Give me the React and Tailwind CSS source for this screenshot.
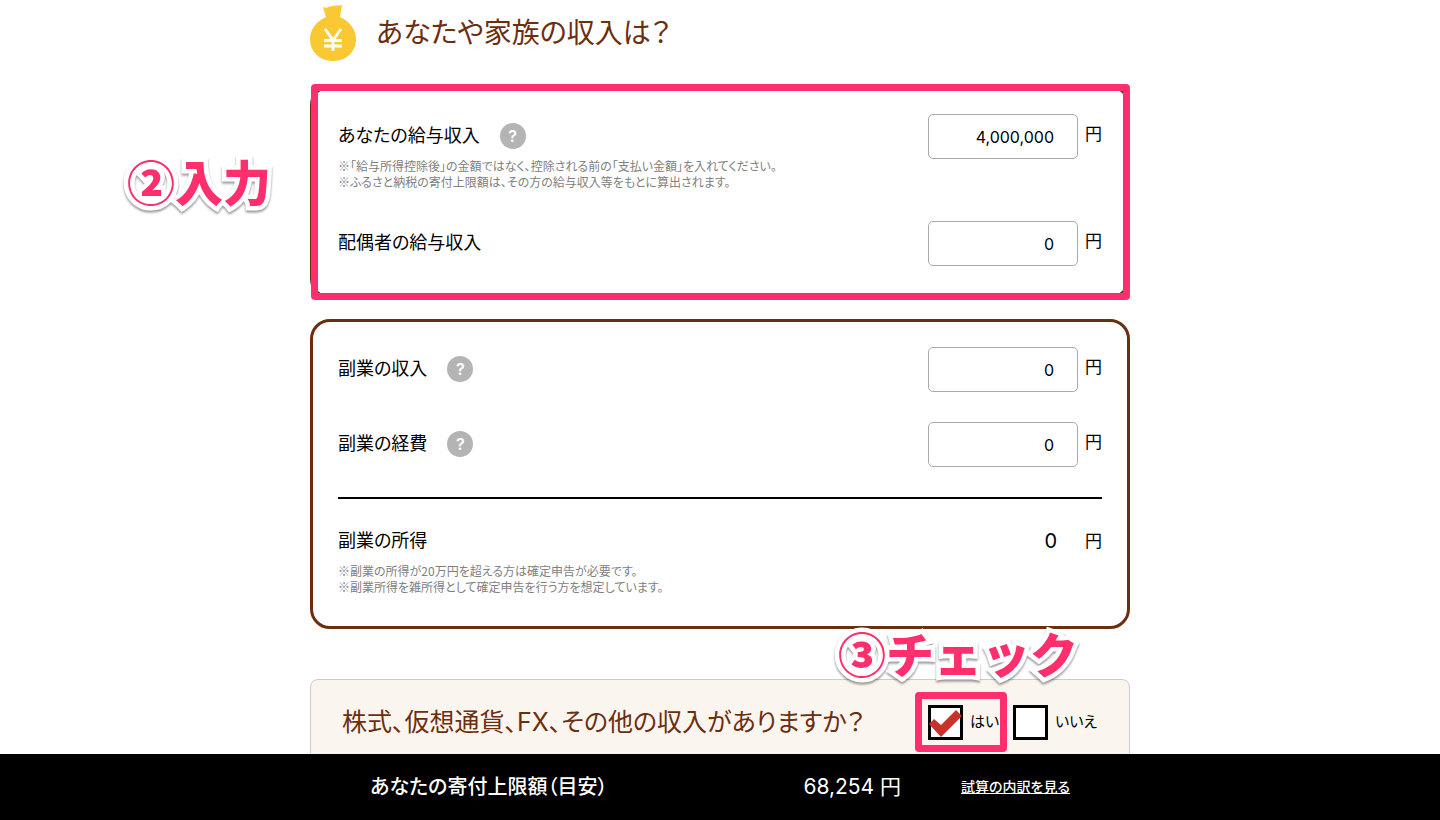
import React, { useState } from 'react';

const HelpButton = ({ label }) => (
  <button
    type="button"
    aria-label={`${label}について`}
    className="flex h-[26px] w-[26px] items-center justify-center rounded-full bg-[#b4b4b4] text-base font-semibold leading-none text-white"
  >
    ?
  </button>
);

const Notes = ({ lines }) => (
  <div className="font-['Noto_Sans_CJK_JP',sans-serif] text-xs leading-4 text-[#808080]">
    {lines.map((line) => (
      <p key={line}>{line}</p>
    ))}
  </div>
);

const AmountRow = ({ id, label, help, notes, value, onChange }) => (
  <div className="flex items-start justify-between">
    <div>
      <div className="flex h-11 items-center gap-5">
        <label htmlFor={id} className="text-lg">{label}</label>
        {help && <HelpButton label={label} />}
      </div>
      {notes && <Notes lines={notes} />}
    </div>
    <div className="flex items-center gap-[7px]">
      <input
        id={id}
        type="text"
        inputMode="numeric"
        value={value}
        onChange={(e) => onChange(id, e.target.value)}
        className="h-[45px] w-[150px] rounded-[5px] border border-[#aaa] bg-white pr-[23px] text-right text-base outline-none"
      />
      <span className="pb-1 text-[17px]">円</span>
    </div>
  </div>
);

const Callout = ({ children }) => (
  <span className="block whitespace-nowrap font-['Noto_Sans_CJK_JP',sans-serif] text-5xl font-black leading-none text-[#ff2f6e] drop-shadow-[0_2px_1px_rgba(0,0,0,0.4)] [-webkit-text-stroke:9px_white] [font-feature-settings:normal] [paint-order:stroke_fill]">
    {children}
  </span>
);

const Choice = ({ label, checked, onSelect }) => (
  <label className="flex items-center gap-[7px] text-[15px]">
    <span className="relative h-[35px] w-[35px]">
      <input
        type="radio"
        name="otherIncome"
        checked={checked}
        onChange={onSelect}
        className="block h-[35px] w-[35px] appearance-none border-[3px] border-black bg-white"
      />
      {checked && (
        <svg viewBox="0 0 35 35" className="pointer-events-none absolute inset-0" aria-hidden="true">
          <path d="M1 19L6 14L13 20L28 5L34 11L13 32Z" fill="#c8322b" />
        </svg>
      )}
    </span>
    {label}
  </label>
);

const MoneyBag = () => (
  <svg width="46" height="56" viewBox="0 0 46 56" aria-hidden="true">
    <path
      d="M13 2C17 4 19 1 23 1C26 0 29 1 32 0L30 12C39 16 46 24 46 34C46 47 36 56 23 56C10 56 0 47 0 34C0 24 7 16 16 12Z"
      fill="#fac832"
    />
    <path d="M15 24L23 35L31 24M23 35V46M14 35.500H32M14 41H32" fill="none" stroke="#fff" strokeWidth="2.800" />
  </svg>
);

export default function App() {
  const [amounts, setAmounts] = useState({
    salary: '4,000,000',
    spouseSalary: '0',
    sideIncome: '0',
    sideExpense: '0',
  });
  const [otherIncome, setOtherIncome] = useState('yes');

  const handleAmount = (id, value) => setAmounts((prev) => ({ ...prev, [id]: value }));

  return (
    <div className="flex h-screen flex-col bg-white font-[Inter,'Noto_Sans_CJK_JP',sans-serif] text-black [font-feature-settings:'palt']">
      <main className="min-h-0 flex-1 overflow-hidden">
        <div className="mx-auto w-full max-w-[820px] pt-[5px]">
          <h1 className="flex items-center gap-5 text-[28px] leading-[56px] text-[#6b2e0f]">
            <MoneyBag />
            あなたや家族の収入は？
          </h1>

          {/* Salary */}
          <section className="relative mt-6 flex flex-col gap-[31px] rounded-[20px] border-[3px] border-[#6b2e0f] px-[25px] pb-[30px] pt-[26px]">
            <AmountRow
              id="salary"
              label="あなたの給与収入"
              help
              notes={[
                '※「給与所得控除後」の金額ではなく、控除される前の「支払い金額」を入れてください。',
                '※ふるさと納税の寄付上限額は、その方の給与収入等をもとに算出されます。',
              ]}
              value={amounts.salary}
              onChange={handleAmount}
            />
            <AmountRow id="spouseSalary" label="配偶者の給与収入" value={amounts.spouseSalary} onChange={handleAmount} />
            <div className="pointer-events-none absolute -bottom-1 -left-[2px] -right-[3px] -top-1 rounded border-[7px] border-[#ff2f6e]" />
            <div className="absolute right-full top-[68px] mr-[42px]">
              <Callout>②入力</Callout>
            </div>
          </section>

          {/* Side job */}
          <section className="mt-5 rounded-[20px] border-[3px] border-[#6b2e0f] px-[25px] pb-[31px] pt-[25px]">
            <div className="flex flex-col gap-[30px]">
              <AmountRow id="sideIncome" label="副業の収入" help value={amounts.sideIncome} onChange={handleAmount} />
              <AmountRow id="sideExpense" label="副業の経費" help value={amounts.sideExpense} onChange={handleAmount} />
            </div>
            <hr className="mb-5 mt-[30px] border-t-2 border-black" />
            <div className="flex h-11 items-center justify-between text-lg">
              <span>副業の所得</span>
              <div className="flex items-center gap-7">
                <span className="text-xl">0</span>
                <span className="text-[17px]">円</span>
              </div>
            </div>
            <Notes
              lines={[
                '※副業の所得が20万円を超える方は確定申告が必要です。',
                '※副業所得を雑所得として確定申告を行う方を想定しています。',
              ]}
            />
          </section>

          {/* Other income */}
          <section className="relative mt-[50px] flex items-center justify-between rounded-lg border border-[#ccc] bg-[#faf5ee] py-[25px] pl-[31px] pr-8">
            <h2 className="text-[25px] leading-[35px] text-[#6b2e0f]">株式、仮想通貨、FX、その他の収入がありますか？</h2>
            <div className="flex gap-[14px]">
              <div className="relative">
                <Choice label="はい" checked={otherIncome === 'yes'} onSelect={() => setOtherIncome('yes')} />
                <div className="pointer-events-none absolute -bottom-3 -left-[13px] -right-2 -top-[13px] rounded border-[7px] border-[#ff2f6e]" />
              </div>
              <Choice label="いいえ" checked={otherIncome === 'no'} onSelect={() => setOtherIncome('no')} />
            </div>
            <div className="absolute -top-[52px] right-[51px]">
              <Callout>③チェック</Callout>
            </div>
          </section>
        </div>
      </main>

      <footer className="h-[66px] shrink-0 bg-black text-white">
        <div className="mx-auto flex h-full w-full max-w-[700px] items-center text-xl">
          <span className="flex-1 font-medium">あなたの寄付上限額（目安）</span>
          <span className="text-[21px]">68,254 円</span>
          <a href="#breakdown" className="ml-[60px] text-sm font-medium underline">試算の内訳を見る</a>
        </div>
      </footer>
    </div>
  );
}
